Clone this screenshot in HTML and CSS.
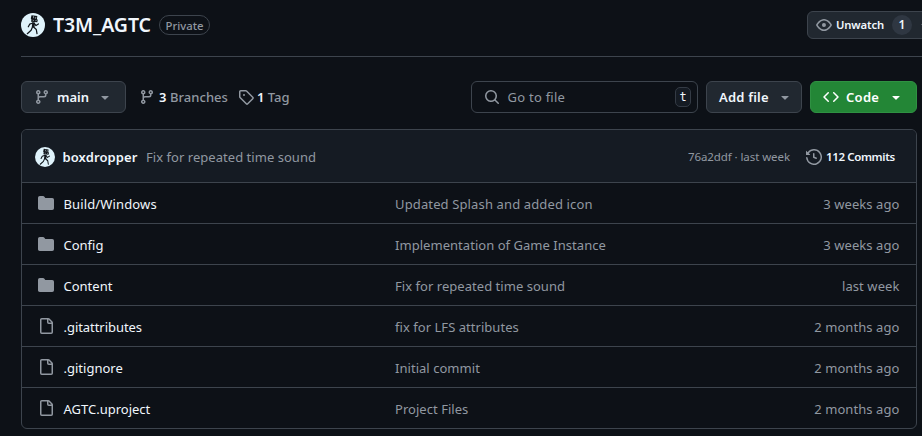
FILE: index.html
```html
<!DOCTYPE html>
<html lang="en">
<head>
<meta charset="utf-8">
<title>T3M_AGTC</title>
<link rel="stylesheet" href="styles.css">
</head>
<body>
<svg class="defs" width="0" height="0" aria-hidden="true">
  <symbol id="branch" viewBox="0 0 16 16"><path d="M9.5 3.25a2.25 2.25 0 1 1 3 2.122V6A2.5 2.5 0 0 1 10 8.5H6a1 1 0 0 0-1 1v1.128a2.251 2.251 0 1 1-1.5 0V5.372a2.25 2.25 0 1 1 1.5 0v1.836A2.493 2.493 0 0 1 6 7h4a1 1 0 0 0 1-1v-.628A2.25 2.25 0 0 1 9.5 3.25Zm-6 0a.75.75 0 1 0 1.5 0 .75.75 0 0 0-1.5 0Zm8.25-.75a.75.75 0 1 0 0 1.5.75.75 0 0 0 0-1.5ZM4.25 12a.75.75 0 1 0 0 1.5.75.75 0 0 0 0-1.5Z"/></symbol>
  <symbol id="tag" viewBox="0 0 16 16"><path d="M1 7.775V2.75C1 1.784 1.784 1 2.75 1h5.025c.464 0 .91.184 1.238.513l6.25 6.25a1.75 1.75 0 0 1 0 2.474l-5.026 5.026a1.75 1.75 0 0 1-2.474 0l-6.25-6.25A1.752 1.752 0 0 1 1 7.775Zm1.5 0c0 .066.026.13.073.177l6.25 6.25a.25.25 0 0 0 .354 0l5.025-5.025a.25.25 0 0 0 0-.354l-6.25-6.25a.25.25 0 0 0-.177-.073H2.75a.25.25 0 0 0-.25.25ZM6 5a1 1 0 1 1 0 2 1 1 0 0 1 0-2Z"/></symbol>
  <symbol id="eye" viewBox="0 0 16 16"><path d="M8 2c1.981 0 3.671.992 4.933 2.078 1.27 1.091 2.187 2.345 2.637 3.023a1.62 1.62 0 0 1 0 1.798c-.45.678-1.367 1.932-2.637 3.023C11.67 13.008 9.981 14 8 14c-1.981 0-3.671-.992-4.933-2.078C1.797 10.83.88 9.576.43 8.898a1.62 1.62 0 0 1 0-1.798c.45-.677 1.367-1.931 2.637-3.022C4.33 2.992 6.019 2 8 2ZM1.679 7.932a.12.12 0 0 0 0 .136c.411.622 1.241 1.75 2.366 2.717C5.176 11.758 6.527 12.5 8 12.5c1.473 0 2.825-.742 3.955-1.715 1.124-.967 1.954-2.096 2.366-2.717a.12.12 0 0 0 0-.136c-.412-.621-1.242-1.75-2.366-2.717C10.824 4.242 9.473 3.5 8 3.5c-1.473 0-2.825.742-3.955 1.715-1.124.967-1.954 2.096-2.366 2.717ZM8 10a2 2 0 1 1-.001-3.999A2 2 0 0 1 8 10Z"/></symbol>
  <symbol id="search" viewBox="0 0 16 16"><path d="M10.68 11.74a6 6 0 0 1-7.922-8.982 6 6 0 0 1 8.982 7.922l3.04 3.04a.749.749 0 0 1-.326 1.275.749.749 0 0 1-.734-.215ZM11.5 7a4.499 4.499 0 1 0-8.997 0A4.499 4.499 0 0 0 11.5 7Z"/></symbol>
  <symbol id="code" viewBox="0 0 16 16"><path d="m11.28 3.22 4.25 4.25a.75.75 0 0 1 0 1.06l-4.25 4.25a.749.749 0 0 1-1.275-.326.749.749 0 0 1 .215-.734L13.94 8l-3.72-3.72a.749.749 0 0 1 .326-1.275.749.749 0 0 1 .734.215Zm-6.56 0a.751.751 0 0 1 1.042.018.751.751 0 0 1 .018 1.042L2.06 8l3.72 3.72a.749.749 0 0 1-.326 1.275.749.749 0 0 1-.734-.215L.47 8.53a.75.75 0 0 1 0-1.06Z"/></symbol>
  <symbol id="caret" viewBox="0 0 16 16"><path d="m4.427 7.427 3.396 3.396a.25.25 0 0 0 .354 0l3.396-3.396A.25.25 0 0 0 11.396 7H4.604a.25.25 0 0 0-.177.427Z"/></symbol>
  <symbol id="history" viewBox="0 0 16 16"><path d="m.427 1.927 1.215 1.215a8.002 8.002 0 1 1-1.6 5.685.75.75 0 1 1 1.493-.154 6.5 6.5 0 1 0 1.18-4.458l1.358 1.358A.25.25 0 0 1 3.896 6H.25A.25.25 0 0 1 0 5.75V2.104a.25.25 0 0 1 .427-.177ZM7.75 4a.75.75 0 0 1 .75.75v2.992l2.028.812a.75.75 0 0 1-.557 1.392l-2.5-1A.751.751 0 0 1 7 8.25v-3.5A.75.75 0 0 1 7.75 4Z"/></symbol>
  <symbol id="folder" viewBox="0 0 16 16"><path d="M1.75 1A1.75 1.75 0 0 0 0 2.750v10.500C0 14.216.784 15 1.750 15h12.500A1.750 1.750 0 0 0 16 13.250v-8.500A1.750 1.750 0 0 0 14.250 3H7.500a.25.25 0 0 1-.2-.1l-.9-1.200C6.070 1.260 5.550 1 5 1H1.750Z"/></symbol>
  <symbol id="file" viewBox="0 0 16 16"><path d="M2 1.750C2 .784 2.784 0 3.750 0h6.586c.464 0 .909.184 1.237.513l2.914 2.914c.329.328.513.773.513 1.237v9.586A1.750 1.750 0 0 1 13.250 16h-9.500A1.750 1.750 0 0 1 2 14.250Zm1.750-.25a.25.25 0 0 0-.25.25v12.500c0 .138.112.25.25.25h9.500a.25.25 0 0 0 .25-.25V6h-2.750A1.750 1.750 0 0 1 9 4.250V1.500Zm6.750.062V4.250c0 .138.112.25.25.25h2.688l-.011-.013-2.914-2.914-.013-.011Z"/></symbol>
  <symbol id="avatar" viewBox="0 0 24 24">
    <circle cx="12" cy="12" r="12" fill="#dff3fb"/>
    <path fill="#10151a" d="m10.500 2.200 5.800.8-.4 3.200.9.500-.5 2.600-6.200-.6.300-2.300-.6-.8Z"/>
    <path stroke="#b9ccd4" stroke-width=".7" fill="none" d="m12.500 3.200.2 2m2.200-1.300-.5 1.800M11.700 7.200l1.200.3m1.500.200 1.200-.2"/>
    <path fill="#10151a" d="m11.300 9.200 2.600.4-.4 5-2.700-.6Z"/>
    <path stroke="#10151a" stroke-width="1.250" stroke-linecap="round" stroke-linejoin="round" fill="none" d="m12.300 13.800 3 2.700.7 4.200M11.600 13.800l-1.500 3.500-3.800 3.400M12 10l-3.300 1.200-1.400 2.600m5.900-3.300 1.800 2 2.400-1.600"/>
  </symbol>
</svg>
<div class="page">
  <header class="repo">
    <svg class="avatar-lg"><use href="#avatar"/></svg>
    <h1>T3M_AGTC</h1>
    <span class="badge">Private</span>
    <div class="btn watch"><svg class="icon"><use href="#eye"/></svg><b>Unwatch</b><span class="counter">1</span><svg class="icon caret"><use href="#caret"/></svg></div>
  </header>
  <div class="toolbar">
    <div class="btn main"><svg class="icon"><use href="#branch"/></svg><b>main</b><svg class="icon caret"><use href="#caret"/></svg></div>
    <div class="stat branches"><svg class="icon"><use href="#branch"/></svg><span><b>3</b> Branches</span></div>
    <div class="stat tags"><svg class="icon"><use href="#tag"/></svg><span><b>1</b> Tag</span></div>
    <div class="search"><svg class="icon"><use href="#search"/></svg><span>Go to file</span><kbd>t</kbd></div>
    <div class="btn add"><b>Add file</b><svg class="icon caret"><use href="#caret"/></svg></div>
    <div class="btn code"><svg class="icon"><use href="#code"/></svg><b>Code</b><svg class="icon caret"><use href="#caret"/></svg></div>
  </div>
  <section class="files">
    <div class="commit">
      <svg class="avatar-sm"><use href="#avatar"/></svg>
      <b class="author">boxdropper</b>
      <span class="message">Fix for repeated time sound</span>
      <span class="sha">76a2ddf · last week</span>
      <svg class="icon"><use href="#history"/></svg>
      <b class="count">112 Commits</b>
    </div>
    <div class="row"><svg class="icon"><use href="#folder"/></svg><span class="name wide">Build/Windows</span><span class="message wide">Updated Splash and added icon</span><span class="age">3 weeks ago</span></div>
    <div class="row"><svg class="icon"><use href="#folder"/></svg><span class="name">Config</span><span class="message">Implementation of Game Instance</span><span class="age">3 weeks ago</span></div>
    <div class="row"><svg class="icon"><use href="#folder"/></svg><span class="name">Content</span><span class="message">Fix for repeated time sound</span><span class="age">last week</span></div>
    <div class="row"><svg class="icon"><use href="#file"/></svg><span class="name tight">.gitattributes</span><span class="message">fix for LFS attributes</span><span class="age">2 months ago</span></div>
    <div class="row"><svg class="icon"><use href="#file"/></svg><span class="name">.gitignore</span><span class="message">Initial commit</span><span class="age">2 months ago</span></div>
    <div class="row"><svg class="icon"><use href="#file"/></svg><span class="name">AGTC.uproject</span><span class="message">Project Files</span><span class="age">2 months ago</span></div>
  </section>
</div>
</body>
</html>
```

FILE: styles.css
```css
* { box-sizing: border-box; }
body {
  margin: 0;
  height: 436px;
  overflow: hidden;
  background: #0d1117;
  color: #f0f6fc;
  font: 13px/20px "Noto Sans", sans-serif;
  white-space: nowrap;
}
b { font-weight: 600; }
.defs { position: absolute; }
.icon { width: 16px; height: 16px; flex: none; fill: #9198a1; }
.page { padding-left: 21px; }

.repo {
  display: flex;
  align-items: center;
  height: 57px;
  padding-bottom: 7px;
  border-bottom: 1px solid #3d444d;
}
.avatar-lg { width: 24px; height: 24px; flex: none; }
h1 {
  margin: 1px 0 0 8px;
  width: 98px;
  font-size: 19.5px;
  line-height: 26px;
  font-weight: 600;
  letter-spacing: -0.1px;
}
.badge {
  margin-left: 8px;
  width: 51px;
  height: 20px;
  border: 1px solid #3d444d;
  border-radius: 10px;
  color: #9198a1;
  font-size: 11.3px;
  font-weight: 500;
  line-height: 19px;
  text-align: center;
}
.btn {
  display: flex;
  align-items: center;
  flex: none;
  height: 32px;
  background: #212830;
  border: 1px solid #3d444d;
  border-radius: 6px;
}
.watch {
  margin: 0 -30px 0 auto;
  width: 145px;
  height: 28px;
  padding-left: 8px;
  font-size: 11.3px;
}
.watch b { margin-left: 4px; width: 48px; letter-spacing: -0.15px; }
.counter {
  margin-left: 8px;
  width: 20px;
  height: 20px;
  border-radius: 10px;
  background: #2f3742;
  font-size: 12px;
  font-weight: 600;
  text-align: center;
}
.watch .caret { margin-left: 5px; }

.toolbar { display: flex; margin: 24px 5px 16px 0; }
.main { width: 105px; padding-left: 12px; }
.main b { margin-left: 7px; width: 33px; }
.main .caret { margin-left: 7px; }
.stat { display: flex; align-items: center; color: #9198a1; font-weight: 500; }
.stat b { color: #f0f6fc; }
.branches { margin-left: 13px; width: 90px; }
.branches span { margin-left: 4px; letter-spacing: 0.05px; }
.tags { margin-left: 9px; }
.tags span { margin-left: 3px; }
.search {
  display: flex;
  align-items: center;
  width: 227px;
  height: 32px;
  margin-left: auto;
  padding: 0 6px 0 12px;
  border: 1px solid #3d444d;
  border-radius: 6px;
  color: #9198a1;
}
.search span { margin-left: 7.5px; letter-spacing: 0.25px; }
kbd {
  margin-left: auto;
  width: 16px;
  height: 20px;
  border: 1px solid #343b45;
  border-radius: 5px;
  background: #151b23;
  color: #f0f6fc;
  font: 12px/18px "DejaVu Sans Mono", monospace;
  text-align: center;
}
.add { margin-left: 8px; width: 96px; padding-left: 12px; }
.add b { width: 50px; letter-spacing: 0.2px; }
.add .caret { margin-left: 8px; }
.code { margin-left: 8px; width: 107px; padding-left: 12px; background: #238636; border-color: #2f9142; }
.code .icon { fill: #fff; }
.code b { margin-left: 7px; width: 34px; color: #fff; letter-spacing: 0.3px; }
.code .caret { margin-left: 8px; }

.files {
  width: 896px;
  height: 300px;
  border: 1px solid #3d444d;
  border-radius: 6px;
  overflow: hidden;
}
.commit {
  display: flex;
  align-items: center;
  height: 52px;
  padding: 2px 21px 0 13px;
  background: #151b23;
}
.avatar-sm { width: 20px; height: 20px; flex: none; }
.author { margin-left: 7.5px; width: 75.5px; letter-spacing: 0.1px; }
.message, .age, .sha { color: #9198a1; }
.message { letter-spacing: 0.04px; }
.commit .message { margin-left: 8px; }
.sha { margin-left: auto; font-size: 11.5px; letter-spacing: -0.08px; }
.commit .icon { margin-left: 16px; }
.count { margin-left: 4px; width: 69px; font-size: 11.5px; letter-spacing: -0.37px; }
.row {
  display: grid;
  grid-template-columns: 16px 316px 1fr auto;
  column-gap: 10px;
  align-items: center;
  height: 41px;
  padding: 2px 16.5px 0 16px;
  border-top: 1px solid #3d444d;
}
.row .icon { margin-top: -3px; }
.row .name { margin-left: -0.5px; }
.row .message { margin-left: 5px; }
.row .age { letter-spacing: 0.08px; }
.row .wide { letter-spacing: 0.13px; }
.row .tight { letter-spacing: -0.05px; }
```
